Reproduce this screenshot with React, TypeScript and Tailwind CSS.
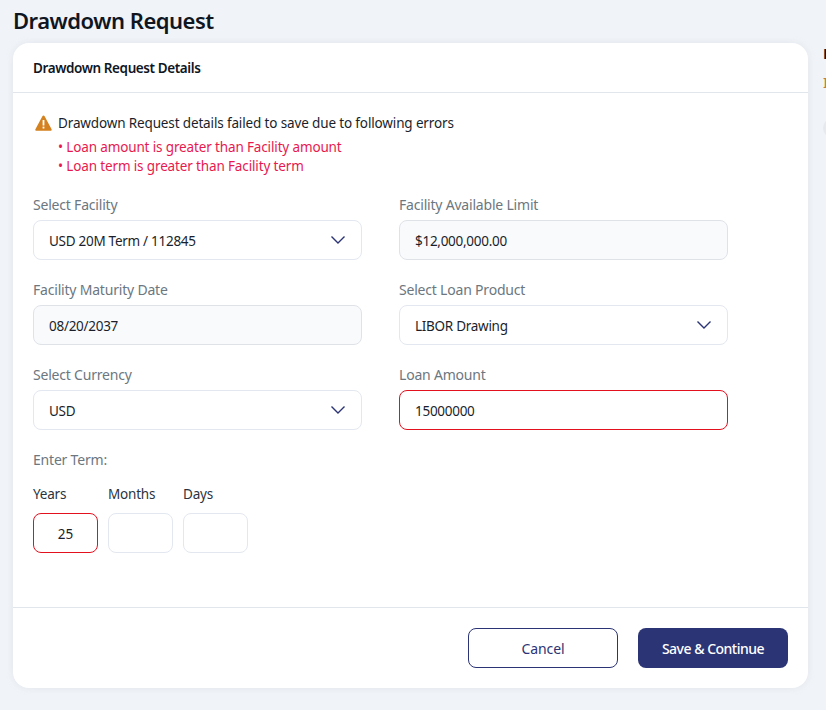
import React from "react";

const font = "font-['Noto_Sans','Open_Sans',sans-serif]";

const Chevron = () => (
  <svg width="16" height="10" viewBox="0 0 16 10" fill="none" className="text-[#2b3475]">
    <path d="M1.5 1.5L8 8l6.5-6.5" stroke="currentColor" strokeWidth="1.4" />
  </svg>
);

const WarningIcon = () => (
  <svg width="17" height="16" viewBox="0 0 17 16" className="shrink-0">
    <path d="M8.5 0.5c.5 0 .9.3 1.1.7l7 13c.4.7-.1 1.6-1 1.6H1.4c-.9 0-1.4-.9-1-1.6l7-13c.2-.4.6-.7 1.1-.7z" fill="#d4811f" />
    <rect x="7.6" y="5" width="1.8" height="5.5" fill="#fff" />
    <rect x="7.6" y="11.6" width="1.8" height="1.9" fill="#fff" />
  </svg>
);

type FieldProps = {
  label: string;
  value: string;
  kind?: "select" | "readonly" | "error";
};

const Field = ({ label, value, kind }: FieldProps) => {
  const boxStyle =
    kind === "readonly"
      ? "bg-[#f9fafc] border-[#dfe3e8]"
      : kind === "error"
      ? "bg-white border-[#e3101e]"
      : "bg-white border-[#e3e7ef]";
  return (
    <div className="flex flex-col">
      <label className="text-[14px] leading-[20px] tracking-[-0.2px] text-[#6c7780]">{label}</label>
      <div
        className={`${boxStyle} mt-[5px] flex h-[40px] items-center justify-between rounded-[8px] border px-[15px] text-[13.5px] tracking-[-0.28px] text-[#1a1f2b]`}
      >
        <span className="pt-[2px]">{value}</span>
        {kind === "select" && <Chevron />}
      </div>
    </div>
  );
};

const TermBox = ({ label, value, error }: { label: string; value?: string; error?: boolean }) => (
  <div className="flex w-[65px] flex-col">
    <span className="text-[13.5px] leading-[20px] tracking-[-0.2px] text-[#2a3340]">{label}</span>
    <div
      className={`${
        error ? "border-[#e3101e]" : "border-[#e3e7ef]"
      } mt-[9px] flex h-[40px] items-center justify-center rounded-[8px] border pt-[2px] text-[13.5px] text-[#1a1f2b]`}
    >
      {value}
    </div>
  </div>
);

export default function App() {
  return (
    <div className={`${font} flex h-[710px] w-[826px] flex-col overflow-hidden bg-[#f0f3f7] pl-[13px]`}>
      <h1 className="h-[43px] pt-[3px] text-[22px] leading-[34px] font-semibold tracking-[-0.5px] text-[#10161f]">
        Drawdown Request
      </h1>
      <div className="flex items-start gap-[16px]">
        <div className="flex h-[645px] w-[795px] shrink-0 flex-col rounded-[16px] bg-white shadow-[0_0_6px_rgba(200,208,220,0.35)]">
          <div className="flex h-[50px] items-center border-b border-[#e1e5ec] px-[20px] pt-[2px] text-[13.5px] font-semibold tracking-[-0.4px] text-[#10161f]">
            Drawdown Request Details
          </div>
          <div className="flex-1 px-[20px] pt-[20px]">
            <div className="flex items-center gap-[6px] pl-[2px]">
              <WarningIcon />
              <span className="text-[13.5px] leading-[20px] tracking-[-0.14px] text-[#1a1f2b]">
                Drawdown Request details failed to save due to following errors
              </span>
            </div>
            <ul className="mt-[5px] pl-[25px] text-[13.5px] leading-[19px] tracking-[-0.14px] text-[#e8194f]">
              <li>• Loan amount is greater than Facility amount</li>
              <li>• Loan term is greater than Facility term</li>
            </ul>
            <div className="mt-[19px] grid w-[695px] grid-cols-2 gap-x-[37px] gap-y-[20px]">
              <Field label="Select Facility" value="USD 20M Term / 112845" kind="select" />
              <Field label="Facility Available Limit" value="$12,000,000.00" kind="readonly" />
              <Field label="Facility Maturity Date" value="08/20/2037" kind="readonly" />
              <Field label="Select Loan Product" value="LIBOR Drawing" kind="select" />
              <Field label="Select Currency" value="USD" kind="select" />
              <Field label="Loan Amount" value="15000000" kind="error" />
            </div>
            <p className="mt-[20px] text-[14px] leading-[20px] tracking-[-0.2px] text-[#6c7780]">Enter Term:</p>
            <div className="mt-[14px] flex gap-[10px]">
              <TermBox label="Years" value="25" error />
              <TermBox label="Months" />
              <TermBox label="Days" />
            </div>
          </div>
          <div className="flex h-[81px] items-center justify-end gap-[20px] border-t border-[#e1e5ec] px-[20px]">
            <button className="h-[40px] w-[150px] rounded-[8px] border border-[#2b3475] bg-white text-[14px] tracking-[-0.1px] text-[#2b3475]">
              Cancel
            </button>
            <button className="h-[40px] w-[150px] rounded-[8px] bg-[#2b3475] text-[14px] font-medium tracking-[-0.5px] text-white">
              Save &amp; Continue
            </button>
          </div>
        </div>
        <div className="flex w-[120px] shrink-0 -translate-x-[1px] flex-col">
          <span className="text-[15px] leading-[20px] font-bold text-[#10161f]">Details</span>
          <span className="mt-[9px] text-[15px] leading-[20px] font-medium text-[#c9802a]">Incomplete</span>
          <span className="mt-[26px] size-[20px] rounded-full bg-[#e6e9ee]" />
        </div>
      </div>
    </div>
  );
}
